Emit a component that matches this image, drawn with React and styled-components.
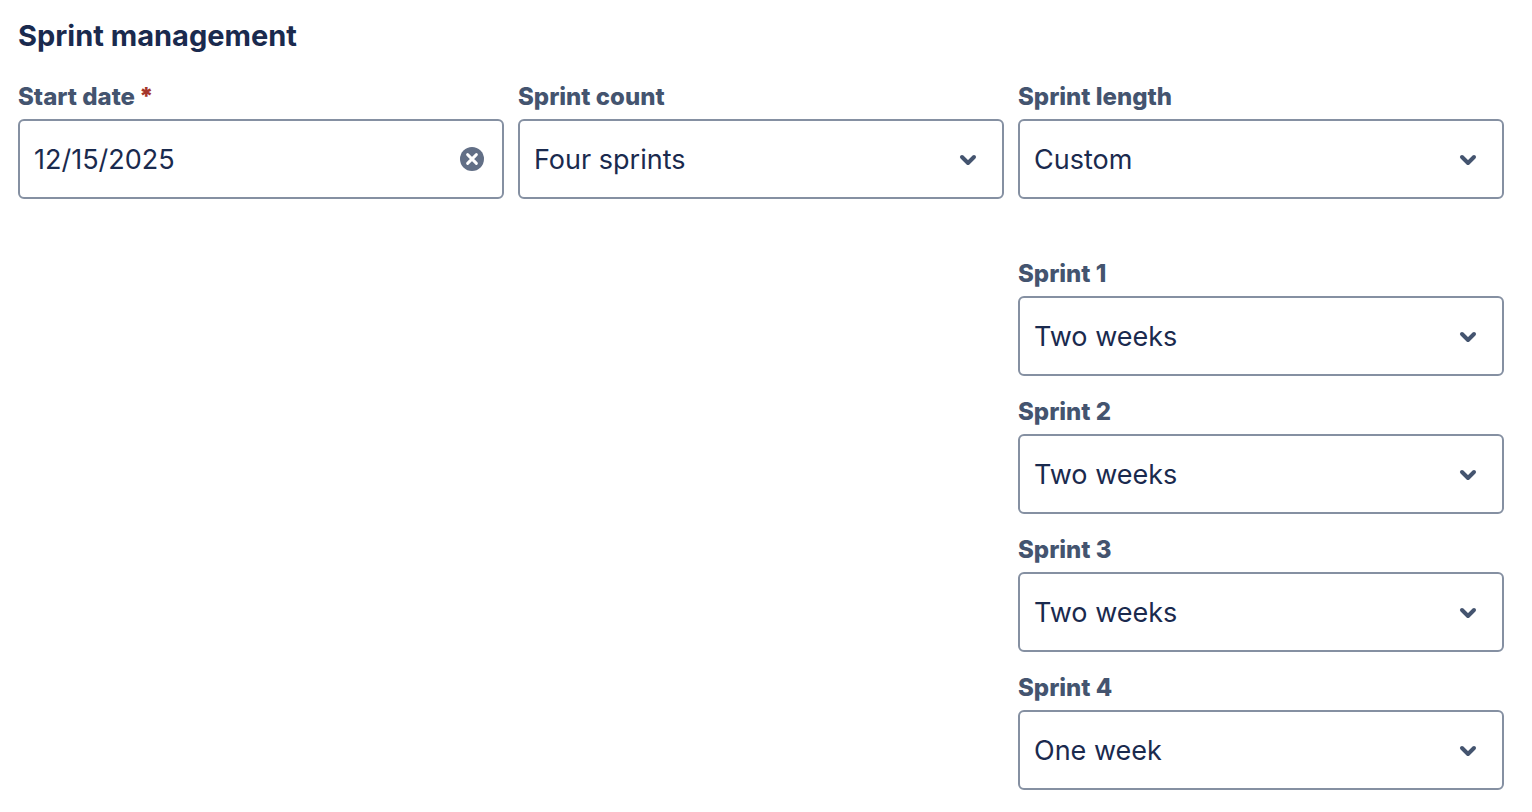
import { useState } from 'react';
import styled, { createGlobalStyle } from 'styled-components';

const colors = {
  TEXT: '#1a2a4e',
  LABEL: '#44546f',
  BORDER: '#8590a2',
  ICON: '#44546f',
  CLEAR: '#626f86',
  REQUIRED: '#a5362a'
};

const countOptions = ['One sprint', 'Two sprints', 'Three sprints', 'Four sprints'];
const lengthOptions = ['One week', 'Two weeks', 'Three weeks', 'Four weeks', 'Custom'];
const weekOptions = lengthOptions.slice(0, 4);

function SelectField({ id, label, value, options, onChange }) {
  return (
    <Field>
      <Label htmlFor={id}>{label}</Label>
      <Control>
        <Select id={id} value={value} onChange={(e) => onChange(e.target.value)}>
          {options.map((option) => (
            <option key={option}>{option}</option>
          ))}
        </Select>
        <Chevron viewBox="0 0 32 32" aria-hidden="true">
          <path d="M10 14 16 20 22 14" />
        </Chevron>
      </Control>
    </Field>
  );
}

function App() {
  const [startDate, setStartDate] = useState('12/15/2025');
  const [count, setCount] = useState('Four sprints');
  const [length, setLength] = useState('Custom');
  const [sprints, setSprints] = useState(['Two weeks', 'Two weeks', 'Two weeks', 'One week']);

  const updateSprint = (index, value) => {
    setSprints(sprints.map((sprint, i) => (i === index ? value : sprint)));
  };

  return (
    <Page>
      <GlobalStyle />
      <Title>Sprint management</Title>
      <Grid>
        <Field>
          <Label htmlFor="start-date">
            Start date<Required>*</Required>
          </Label>
          <Control>
            <Input
              id="start-date"
              type="text"
              required
              value={startDate}
              onChange={(e) => setStartDate(e.target.value)}
            />
            <ClearButton type="button" aria-label="Clear start date" onClick={() => setStartDate('')}>
              <svg viewBox="0 0 24 24" width="24" height="24" aria-hidden="true">
                <circle cx="12" cy="12" r="12" fill={colors.CLEAR} />
                <path
                  d="M7.6 7.6l8.8 8.8M16.4 7.6l-8.8 8.8"
                  stroke="#fff"
                  strokeWidth="2.9"
                  strokeLinecap="round"
                />
              </svg>
            </ClearButton>
          </Control>
        </Field>
        <SelectField
          id="sprint-count"
          label="Sprint count"
          value={count}
          options={countOptions}
          onChange={setCount}
        />
        <SelectField
          id="sprint-length"
          label="Sprint length"
          value={length}
          options={lengthOptions}
          onChange={setLength}
        />
        <CustomLengths>
          {sprints.map((sprint, index) => (
            <SelectField
              key={index}
              id={`sprint-${index + 1}`}
              label={`Sprint ${index + 1}`}
              value={sprint}
              options={weekOptions}
              onChange={(value) => updateSprint(index, value)}
            />
          ))}
        </CustomLengths>
      </Grid>
    </Page>
  );
}

// ---------------------- Styled components ----------------------

const GlobalStyle = createGlobalStyle`
  * {
    box-sizing: border-box;
  }
  body {
    margin: 0;
    background: #fff;
    color: ${colors.TEXT};
    font-family: Inter, sans-serif;
  }
`;

const Page = styled.main`
  padding: 16px 28px 20px 18px;
`;

const Title = styled.h1`
  margin: 0 0 28px;
  font-size: 29px;
  font-weight: 700;
  line-height: 40px;
`;

const Grid = styled.div`
  display: grid;
  grid-template-columns: repeat(3, minmax(0, 1fr));
  column-gap: 14px;
  row-gap: 62px;
`;

const CustomLengths = styled.div`
  display: grid;
  grid-column: 3;
  row-gap: 23px;
`;

const Field = styled.div`
  display: flex;
  flex-direction: column;
  gap: 10px;
`;

const Label = styled.label`
  color: ${colors.LABEL};
  font-size: 24px;
  font-weight: 800;
  line-height: 25px;
`;

const Required = styled.span`
  margin-left: 4px;
  color: ${colors.REQUIRED};
  font-weight: 900;
`;

const Control = styled.div`
  position: relative;
  display: flex;
`;

const Input = styled.input`
  width: 100%;
  height: 80px;
  padding: 0 60px 0 14px;
  border: 2px solid ${colors.BORDER};
  border-radius: 6px;
  background: #fff;
  color: ${colors.TEXT};
  font-family: inherit;
  font-size: 27px;
`;

const Select = styled(Input).attrs({ as: 'select' })`
  appearance: none;
`;

const ClearButton = styled.button`
  position: absolute;
  top: 28px;
  right: 20px;
  display: flex;
  padding: 0;
  border: 0;
  background: none;
  cursor: pointer;
`;

const Chevron = styled.svg`
  position: absolute;
  top: 24px;
  right: 20px;
  width: 32px;
  height: 32px;
  fill: none;
  stroke: ${colors.ICON};
  stroke-width: 4;
  stroke-linecap: round;
  stroke-linejoin: round;
  pointer-events: none;
`;

export default App;
